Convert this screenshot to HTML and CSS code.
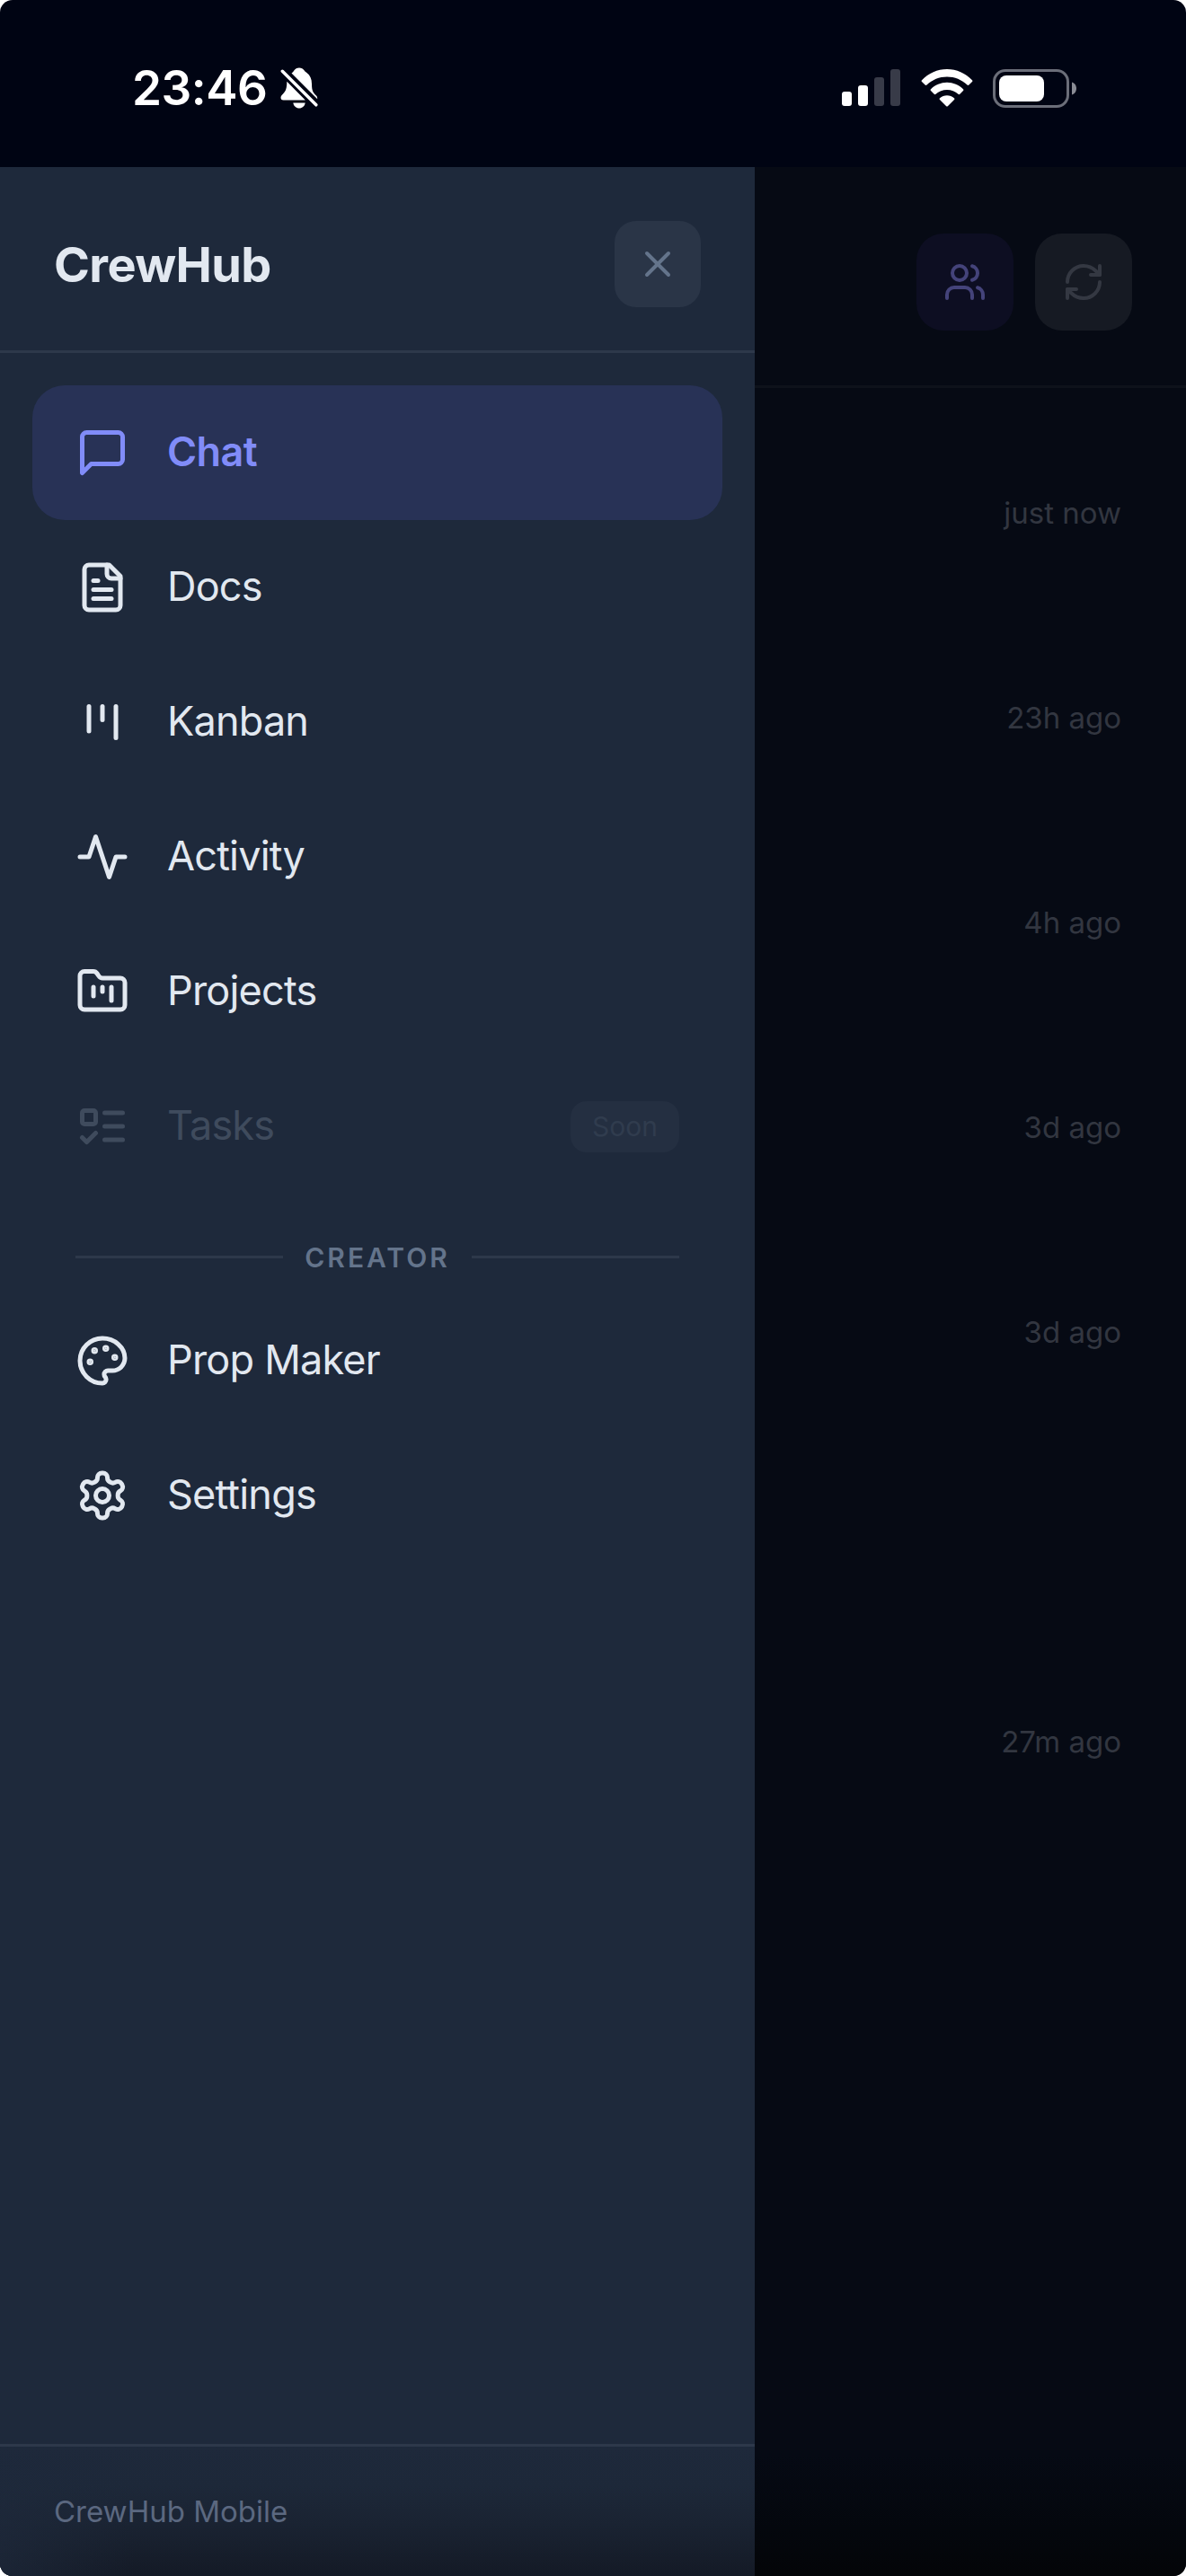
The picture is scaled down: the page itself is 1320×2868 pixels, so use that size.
FILE: index.html
```html
<!DOCTYPE html>
<html lang="en">
<head>
    <meta charset="UTF-8">
    <meta name="viewport" content="width=device-width, initial-scale=1.0">
    <title>CrewHub Mobile</title>
    <link rel="stylesheet" href="styles.css">
</head>
<body>
    <div class="screen">
        <!-- Status bar -->
        <header class="status-bar">
            <div class="status-left">
                <span class="clock">23:46</span>
                <svg class="bell-icon" viewBox="0 0 42 46">
                    <path fill="#fff" d="M12.5 6.5C14 5.4 14.6 4.8 15.3 3.6 16.6 1.6 18.600.6 21 .6s4.400 1 5.700 3c.7 1.200 1.300 1.500 2.700 2.500C33.200 8.900 35 13 35 18.500c0 7.500 1.500 9.500 4.500 12.500 1.600 1.600 1.700 2.600 1.700 4.200z"/>
                    <path fill="#fff" d="M7.300 15.800 27.800 36.500H3.500C1.300 36.500.500 35.300.500 33.800c0-1.600.8-2.500 2.300-4 3.200-3.200 4.500-6 4.500-14z"/>
                    <path fill="#fff" d="M14.300 39.500h13.400c-.5 3.600-3.300 6-6.700 6s-6.200-2.400-6.700-6z"/>
                    <path stroke="#fff" stroke-width="3.500" stroke-linecap="round" d="M2.300 4.300 39.800 41.800"/>
                </svg>
            </div>
            <div class="status-right">
                <svg class="signal-icon" viewBox="0 0 66 42">
                    <rect x="0" y="25" width="11" height="16" rx="3" fill="#fff"/>
                    <rect x="18" y="18" width="11" height="23" rx="3" fill="#fff"/>
                    <rect x="36" y="9" width="11" height="32" rx="3" fill="#383b48"/>
                    <rect x="54" y="0" width="11" height="41" rx="3" fill="#383b48"/>
                </svg>
                <svg class="wifi-icon" viewBox="0 0 58 42">
                    <path d="M1 12.200C8.500 4.400 18.300 0 29 0s20.500 4.400 28 12.200c.6.600.6 1.200 0 1.800l-3.600 3.600c-.6.600-1.300.6-1.900 0C45.500 11.700 37.500 8.500 29 8.500S12.500 11.700 6.500 17.600c-.6.600-1.300.6-1.900 0L1 14c-.6-.6-.6-1.200 0-1.800z"/>
                    <path d="M11 22.200C15.800 17.500 22.200 14.700 29 14.700s13.200 2.800 18 7.500c.6.600.6 1.200 0 1.800l-3.700 3.700c-.6.600-1.200.6-1.800 0-3.400-3-7.800-4.700-12.500-4.700s-9.100 1.700-12.500 4.700c-.6.600-1.200.6-1.800 0L11 24c-.6-.6-.6-1.200 0-1.800z"/>
                    <path d="M21 32.200c2.200-1.900 5-3 8-3s5.800 1.100 8 3c.6.600.6 1.200 0 1.800l-7 7c-.7.700-1.300.7-2 0l-7-7c-.6-.6-.6-1.200 0-1.800z"/>
                </svg>
                <svg class="battery-icon" viewBox="0 0 94 43">
                    <rect x="1.500" y="1.500" width="82" height="40" rx="12.500" fill="none" stroke="#6b6e79" stroke-width="3"/>
                    <rect x="7" y="7" width="50" height="29" rx="8" fill="#fff"/>
                    <path fill="#8a8c95" d="M88 14.500c3 .8 5 3.700 5 7s-2 6.200-5 7z"/>
                </svg>
            </div>
        </header>

        <div class="app">
            <!-- Side drawer -->
            <aside class="drawer">
                <div class="drawer-header">
                    <h1 class="drawer-title">CrewHub</h1>
                    <button class="close-btn" aria-label="Close">
                        <svg class="icon" viewBox="0 0 24 24"><path d="M18 6 6 18"/><path d="m6 6 12 12"/></svg>
                    </button>
                </div>

                <nav class="drawer-nav">
                    <a class="nav-item active">
                        <svg class="icon" viewBox="0 0 24 24"><path d="M21 15a2 2 0 0 1-2 2H7l-4 4V5a2 2 0 0 1 2-2h14a2 2 0 0 1 2 2z"/></svg>
                        <span class="nav-label">Chat</span>
                    </a>
                    <a class="nav-item">
                        <svg class="icon" viewBox="0 0 24 24"><path d="M15 2H6a2 2 0 0 0-2 2v16a2 2 0 0 0 2 2h12a2 2 0 0 0 2-2V7Z"/><path d="M14 2v4a2 2 0 0 0 2 2h4"/><path d="M10 9H8"/><path d="M16 13H8"/><path d="M16 17H8"/></svg>
                        <span class="nav-label">Docs</span>
                    </a>
                    <a class="nav-item">
                        <svg class="icon" viewBox="0 0 24 24"><path d="M6 5v11"/><path d="M12 5v6"/><path d="M18 5v14"/></svg>
                        <span class="nav-label">Kanban</span>
                    </a>
                    <a class="nav-item">
                        <svg class="icon" viewBox="0 0 24 24"><path d="M22 12h-4l-3 9L9 3l-3 9H2"/></svg>
                        <span class="nav-label">Activity</span>
                    </a>
                    <a class="nav-item">
                        <svg class="icon" viewBox="0 0 24 24"><path d="M4 20h16a2 2 0 0 0 2-2V8a2 2 0 0 0-2-2h-7.930a2 2 0 0 1-1.660-.9l-.820-1.200A2 2 0 0 0 7.930 3H4a2 2 0 0 0-2 2v13c0 1.100.9 2 2 2Z"/><path d="M8 10v4"/><path d="M12 10v2"/><path d="M16 10v6"/></svg>
                        <span class="nav-label">Projects</span>
                    </a>
                    <a class="nav-item disabled">
                        <svg class="icon" viewBox="0 0 24 24"><rect x="3" y="5" width="6" height="6" rx="1"/><path d="m3 17 2 2 4-4"/><path d="M13 6h8"/><path d="M13 12h8"/><path d="M13 18h8"/></svg>
                        <span class="nav-label">Tasks</span>
                        <span class="soon-badge">Soon</span>
                    </a>

                    <div class="nav-divider"><span class="divider-label">CREATOR</span></div>

                    <a class="nav-item">
                        <svg class="icon" viewBox="0 0 24 24"><g fill="currentColor"><circle cx="13.500" cy="6.500" r=".5"/><circle cx="17.500" cy="10.500" r=".5"/><circle cx="8.500" cy="7.500" r=".5"/><circle cx="6.500" cy="12.500" r=".5"/></g><path d="M12 2C6.500 2 2 6.500 2 12s4.500 10 10 10c.926 0 1.648-.746 1.648-1.688 0-.437-.180-.835-.437-1.125-.290-.289-.438-.652-.438-1.125a1.640 1.640 0 0 1 1.668-1.668h1.996c3.051 0 5.555-2.503 5.555-5.554C21.965 6.012 17.461 2 12 2z"/></svg>
                        <span class="nav-label">Prop Maker</span>
                    </a>
                    <a class="nav-item">
                        <svg class="icon" viewBox="0 0 24 24"><path d="M12.220 2h-.440a2 2 0 0 0-2 2v.180a2 2 0 0 1-1 1.730l-.430.250a2 2 0 0 1-2 0l-.150-.080a2 2 0 0 0-2.730.730l-.220.380a2 2 0 0 0 .730 2.730l.150.100a2 2 0 0 1 1 1.720v.510a2 2 0 0 1-1 1.740l-.150.090a2 2 0 0 0-.730 2.730l.220.380a2 2 0 0 0 2.730.730l.150-.080a2 2 0 0 1 2 0l.430.250a2 2 0 0 1 1 1.730V20a2 2 0 0 0 2 2h.440a2 2 0 0 0 2-2v-.180a2 2 0 0 1 1-1.730l.430-.250a2 2 0 0 1 2 0l.150.080a2 2 0 0 0 2.730-.730l.220-.390a2 2 0 0 0-.730-2.730l-.150-.080a2 2 0 0 1-1-1.740v-.500a2 2 0 0 1 1-1.740l.150-.090a2 2 0 0 0 .730-2.730l-.220-.380a2 2 0 0 0-2.730-.730l-.150.080a2 2 0 0 1-2 0l-.430-.250a2 2 0 0 1-1-1.730V4a2 2 0 0 0-2-2z"/><circle cx="12" cy="12" r="3"/></svg>
                        <span class="nav-label">Settings</span>
                    </a>
                </nav>

                <div class="drawer-footer">
                    <span class="footer-text">CrewHub Mobile</span>
                </div>
            </aside>

            <!-- Dimmed chat list behind the drawer -->
            <main class="backdrop">
                <div class="toolbar">
                    <button class="tool-btn crew-btn" aria-label="Crew">
                        <svg class="icon" viewBox="0 0 24 24"><path d="M16 21v-2a4 4 0 0 0-4-4H6a4 4 0 0 0-4 4v2"/><circle cx="9" cy="7" r="4"/><path d="M22 21v-2a4 4 0 0 0-3-3.870"/><path d="M16 3.130a4 4 0 0 1 0 7.750"/></svg>
                    </button>
                    <button class="tool-btn refresh-btn" aria-label="Refresh">
                        <svg class="icon" viewBox="0 0 24 24"><path d="M3 12a9 9 0 0 1 9-9 9.750 9.750 0 0 1 6.740 2.740L21 8"/><path d="M21 3v5h-5"/><path d="M21 12a9 9 0 0 1-9 9 9.750 9.750 0 0 1-6.740-2.740L3 16"/><path d="M8 16H3v5"/></svg>
                    </button>
                </div>
                <ul class="chat-times">
                    <li class="chat-time">just now</li>
                    <li class="chat-time">23h ago</li>
                    <li class="chat-time">4h ago</li>
                    <li class="chat-time">3d ago</li>
                    <li class="chat-time">3d ago</li>
                    <li class="chat-time"></li>
                    <li class="chat-time">27m ago</li>
                </ul>
            </main>
        </div>
    </div>
</body>
</html>
```

FILE: styles.css
```css
* {
    margin: 0;
    padding: 0;
    box-sizing: border-box;
}

body {
    background: #ffffff;
    font-family: Inter, "Liberation Sans", sans-serif;
    color: #e2e8f0;
}

.screen {
    width: 1320px;
    height: 2868px;
    display: flex;
    flex-direction: column;
    background: #000413;
    border-radius: 14px;
    overflow: hidden;
}

.icon {
    width: 60px;
    height: 60px;
    flex-shrink: 0;
    fill: none;
    stroke: currentColor;
    stroke-width: 2;
    stroke-linecap: round;
    stroke-linejoin: round;
}

button {
    border: none;
    font: inherit;
}

/* Status bar */
.status-bar {
    height: 186px;
    flex-shrink: 0;
    display: flex;
    justify-content: space-between;
    align-items: center;
    padding: 10px 121px 0 147px;
    color: #ffffff;
}

.status-left,
.status-right {
    display: flex;
    align-items: center;
}

.status-left {
    gap: 15px;
}

.clock {
    font-size: 53px;
    line-height: 60px;
    font-weight: 600;
    letter-spacing: -0.5px;
}

.bell-icon {
    width: 42px;
    height: 46px;
}

.signal-icon {
    width: 66px;
    height: 42px;
}

.wifi-icon {
    width: 58px;
    height: 42px;
    margin-left: 22px;
    fill: #ffffff;
}

.battery-icon {
    width: 94px;
    height: 43px;
    margin-left: 22px;
}

.app {
    flex: 1;
    display: flex;
    min-height: 0;
}

/* Drawer */
.drawer {
    width: 840px;
    flex-shrink: 0;
    display: flex;
    flex-direction: column;
    background: #1e293b;
}

.drawer-header {
    height: 207px;
    display: flex;
    align-items: center;
    justify-content: space-between;
    padding: 12px 60px 0;
    border-bottom: 3px solid #2d384a;
}

.drawer-title {
    font-size: 54px;
    font-weight: 700;
    letter-spacing: -0.6px;
}

.close-btn {
    width: 96px;
    height: 96px;
    display: flex;
    align-items: center;
    justify-content: center;
    border-radius: 24px;
    background: #2a3547;
    color: #64748b;
}

.close-btn .icon {
    width: 48px;
    height: 48px;
}

.drawer-nav {
    flex: 1;
    padding: 36px;
}

.nav-item {
    height: 150px;
    display: flex;
    align-items: center;
    gap: 42px;
    padding: 0 48px;
    border-radius: 36px;
}

.nav-label {
    flex: 1;
    padding-bottom: 3px;
    font-size: 45px;
    letter-spacing: -0.8px;
}

.nav-item.active {
    background: #283256;
    color: #818cf8;
}

.nav-item.active .nav-label {
    font-weight: 600;
    letter-spacing: -0.6px;
}

.nav-item.disabled {
    color: #3f4b5d;
}

.soon-badge {
    height: 57px;
    line-height: 57px;
    padding: 0 24px;
    border-radius: 18px;
    background: #242f41;
    color: #303c4e;
    font-size: 30px;
}

.nav-divider {
    height: 111px;
    display: flex;
    align-items: center;
    gap: 24px;
    padding: 30px 48px 0;
}

.nav-divider::before,
.nav-divider::after {
    content: "";
    flex: 1;
    height: 3px;
    background: #2d384a;
}

.divider-label {
    font-size: 30px;
    font-weight: 600;
    letter-spacing: 3px;
    color: #64748b;
}

.drawer-footer {
    height: 147px;
    padding: 52px 60px 0;
    border-top: 3px solid #2d384a;
    background:
        linear-gradient(90deg, rgba(30, 41, 59, 0.7) 0, rgba(30, 41, 59, 0) 150px),
        linear-gradient(180deg, #1e293b 0%, #1d2839 30%, #1a2332 60%, #141a26 100%);
    color: #5b6880;
}

.footer-text {
    display: block;
    font-size: 33px;
    line-height: 40px;
}

/* Backdrop */
.backdrop {
    flex: 1;
    background: linear-gradient(180deg, #060a14 0%, #060a14 95%, #04070d 98%, #040508 100%);
}

.toolbar {
    height: 246px;
    display: flex;
    align-items: center;
    justify-content: flex-end;
    gap: 24px;
    padding: 13px 60px 0;
    border-bottom: 3px solid #0e121b;
}

.tool-btn {
    width: 108px;
    height: 108px;
    display: flex;
    align-items: center;
    justify-content: center;
    border-radius: 30px;
}

.tool-btn .icon {
    width: 48px;
    height: 48px;
}

.crew-btn {
    background: #0d0e22;
    color: #44437a;
}

.refresh-btn {
    background: #161a23;
    color: #343842;
}

.chat-times {
    list-style: none;
    padding: 25px 72px 0;
}

.chat-time {
    height: 228px;
    line-height: 228px;
    text-align: right;
    font-size: 33px;
    color: #323640;
}
```
